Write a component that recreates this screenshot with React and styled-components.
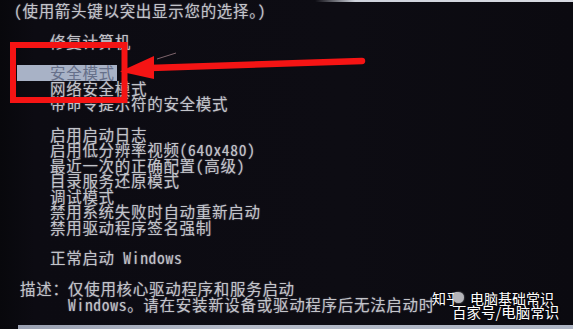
import styled, { createGlobalStyle } from "styled-components";

const GlobalStyle = createGlobalStyle`
  html, body {
    margin: 0;
    padding: 0;
    background: #0b0a10;
  }
`

const Screen = styled.div`
  position: relative;
  box-sizing: border-box;
  width: 573px;
  height: 329px;
  overflow: hidden;
  display: flex;
  flex-direction: column;
  background: linear-gradient(to right, #08080c 0%, #0c0b12 6%, #0d0c13 60%, #0b0a10 100%);
  font-family: "Noto Sans Mono CJK SC", "Noto Sans CJK SC", monospace;
  font-size: 15.5px;
  letter-spacing: 0.7px;
  line-height: 15.45px;
  color: #c3c4ca;
  text-shadow: 0 0 1.5px rgba(190, 192, 205, 0.55);
`

const TopEdge = styled.div`
  height: 2px;
  flex-shrink: 0;
  background: linear-gradient(to right, transparent 0%, transparent 55%, #cfd3dc 62%, #d8dbe2 100%);
`

const Console = styled.div`
  flex: 1;
  padding: 1.4px 0 0 14px;
`

const Line = styled.div`
  height: 15.45px;
  white-space: nowrap;
`

const Menu = styled.div`
  margin-left: 36px;
`

const Item = styled.div`
  height: 15.45px;
  white-space: nowrap;
  width: fit-content;
  ${props => props.$selected && `
    margin-left: -33px;
    padding: 0 2px 0 33px;
    background: #a8b2c6;
    color: #66708a;
    text-shadow: none;
  `}
`

const Desc = styled.div`
  margin-left: 6px;
  display: grid;
  grid-template-columns: 48px auto;
`

const BottomBand = styled.div`
  flex-shrink: 0;
  height: 4px;
  margin-left: 18px;
  background: linear-gradient(to right, #9aa1b2, #b4bac8 40%, #aeb5c4);
`

const Overlay = styled.svg`
  position: absolute;
  left: 0;
  top: 0;
  pointer-events: none;
`

const Watermark = styled.div`
  position: absolute;
  left: 432px;
  top: 291px;
  font-family: "Noto Sans CJK SC", sans-serif;
  color: #ffffff;
  letter-spacing: 0;
  text-shadow: 0 0 2px rgba(0, 0, 0, 0.9);
`

const MarkTop = styled.div`
  display: flex;
  align-items: center;
  font-size: 14px;
  line-height: 16px;
  height: 13px;
  white-space: nowrap;
`

const Avatar = styled.span`
  flex-shrink: 0;
  width: 11px;
  height: 11px;
  border-radius: 50%;
  background: #b4b4b9;
  box-shadow: 0 0 2px rgba(255, 255, 255, 0.6);
  margin: 0 6px 0 -7px;
`

const MarkBottom = styled.div`
  font-size: 14.5px;
  line-height: 15px;
  padding-left: 20px;
  white-space: nowrap;
`

const menuTop = [
  { text: "修复计算机" },
  null,
  { text: "安全模式", selected: true },
  { text: "网络安全模式" },
  { text: "带命令提示符的安全模式" },
  null,
  { text: "启用启动日志" },
  { text: "启用低分辨率视频(640x480)" },
  { text: "最近一次的正确配置(高级)" },
  { text: "目录服务还原模式" },
  { text: "调试模式" },
  { text: "禁用系统失败时自动重新启动" },
  { text: "禁用驱动程序签名强制" },
  null,
  { text: "正常启动 Windows" },
]

export default function App() {
  return (
    <>
      <GlobalStyle />
      <Screen>
        <TopEdge />
        <Console>
          <Line>(使用箭头键以突出显示您的选择。)</Line>
          <Line />
          <Menu>
            {menuTop.map((item, i) =>
              item
                ? <Item key={i} $selected={item.selected}>{item.text}</Item>
                : <Line key={i} />
            )}
          </Menu>
          <Line />
          <Desc>
            <Line>描述：</Line>
            <Line>仅使用核心驱动程序和服务启动</Line>
            <span />
            <Line>Windows。请在安装新设备或驱动程序后无法启动时</Line>
          </Desc>
        </Console>
        <BottomBand />

        <Overlay width="573" height="329" viewBox="0 0 573 329">
          <rect x="13" y="45" width="111.5" height="55" fill="none" stroke="#f51414" strokeWidth="6" />
          <line x1="150" y1="68" x2="362" y2="61" stroke="#f51414" strokeWidth="6.5" strokeLinecap="round" />
          <polygon points="120,71.5 154,56 154,79" fill="#f51414" />
          <line x1="157" y1="59" x2="176" y2="53" stroke="#c9a0a8" strokeWidth="1" opacity="0.6" />
        </Overlay>

        <Watermark>
          <MarkTop>知乎<Avatar />电脑基础常识</MarkTop>
          <MarkBottom>百家号/电脑常识</MarkBottom>
        </Watermark>
      </Screen>
    </>
  )
}
